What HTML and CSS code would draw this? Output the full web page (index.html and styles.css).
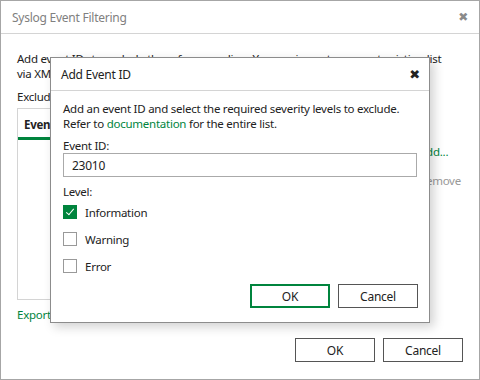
FILE: index.html
```html
<!DOCTYPE html>
<html lang="en">

<head>
    <meta charset="UTF-8">
    <meta name="viewport" content="width=device-width, initial-scale=1.0">
    <title>Syslog Event Filtering</title>
    <link rel="stylesheet" href="styles.css">
</head>

<body>
    <div class="window">
        <div class="titlebar">
            <span class="title">Syslog Event Filtering</span>
            <span class="close">&#x2716;</span>
        </div>

        <div class="content">
            <p class="intro">Add event IDs to exclude them from sending. You can import or export existing list<br>via XML file.</p>
            <p class="label">Exclude the following events:</p>

            <div class="list-row">
                <div class="list-box">
                    <div class="tabs"><span class="tab active">Event ID</span></div>
                </div>
                <div class="list-actions">
                    <a href="#" class="link">Add...</a>
                    <a href="#" class="link disabled">Remove</a>
                </div>
            </div>

            <div class="io-links">
                <a href="#" class="link">Export...</a>
                <a href="#" class="link">Import...</a>
            </div>

            <div class="buttons">
                <button class="btn">OK</button>
                <button class="btn">Cancel</button>
            </div>
        </div>

        <!-- 弹出的子对话框 -->
        <div class="dialog">
            <div class="titlebar dialog-titlebar">
                <span class="title">Add Event ID</span>
                <span class="close">&#x2716;</span>
            </div>
            <div class="dialog-body">
                <p class="desc">Add an event ID and select the required severity levels to exclude.<br>
                    Refer to <a href="#" class="link">documentation</a> for the entire list.</p>

                <label class="field-label" for="eventId">Event ID:</label>
                <input type="text" id="eventId" class="input" value="23010">

                <p class="field-label level">Level:</p>
                <ul class="checks">
                    <li class="check checked"><i class="box"></i><span>Information</span></li>
                    <li class="check"><i class="box"></i><span>Warning</span></li>
                    <li class="check"><i class="box"></i><span>Error</span></li>
                </ul>

                <div class="buttons dialog-buttons">
                    <button class="btn primary">OK</button>
                    <button class="btn dark">Cancel</button>
                </div>
            </div>
        </div>
    </div>
</body>

</html>
```

FILE: styles.css
```css
* {
    box-sizing: border-box;
}

body {
    margin: 0;
    font-family: "Noto Sans", "Open Sans", sans-serif;
    font-size: 11.5px;
    letter-spacing: -0.25px;
    color: #222;
}

p {
    margin: 0;
}

ul {
    padding: 0;
    margin: 0;
    list-style: none;
}

.window {
    position: relative;
    width: 480px;
    height: 380px;
    border: 1px solid #a6a6a6;
    background: #fff;
    overflow: hidden;
}

.titlebar {
    display: flex;
    align-items: center;
    justify-content: space-between;
    height: 33px;
    padding: 0 11px 0 11px;
    border-bottom: 1px solid #d4d4d4;
}

.titlebar .title {
    color: #808080;
    font-size: 12px;
}

.titlebar .close {
    color: #8a8a8a;
    font-size: 12px;
    font-family: "DejaVu Sans", sans-serif;
}

.content {
    padding: 17px 16px 0 16px;
}

.intro {
    line-height: 15px;
    width: 450px;
}

.label {
    margin-top: 8px;
    line-height: 15px;
}

.list-row {
    display: flex;
    margin-top: 4px;
    gap: 12px;
}

.list-box {
    width: 390px;
    height: 192px;
    border: 1px solid #d4d4d4;
}

.tabs {
    display: flex;
    height: 31px;
}

.tab {
    padding: 8px 6px 0 6px;
    font-weight: bold;
}

.tab.active {
    border-bottom: 3px solid #00843d;
}

.list-actions {
    display: flex;
    flex-direction: column;
    gap: 14px;
    padding-top: 36px;
}

.link {
    color: #00843d;
    text-decoration: none;
}

.link.disabled {
    color: #999;
}

.io-links {
    display: flex;
    gap: 150px;
    margin-top: 7px;
    line-height: 15px;
}

.buttons {
    display: flex;
    justify-content: flex-end;
    gap: 8px;
    margin-top: 16px;
}

.btn {
    width: 80px;
    height: 24px;
    background: #fff;
    border: 1px solid #555;
    font-family: inherit;
    font-size: 12px;
    letter-spacing: inherit;
    color: #222;
    padding: 0;
}

.btn.primary {
    border: 2px solid #00843d;
}

/* 子对话框 */
.dialog {
    position: absolute;
    left: 49px;
    top: 56px;
    width: 380px;
    height: 266px;
    background: #fff;
    border: 1px solid #8c8c8c;
    box-shadow: 4px 4px 10px rgba(0, 0, 0, 0.18);
}

.dialog-titlebar {
    height: 33px;
    padding: 0 9px 0 10px;
}

.dialog-titlebar .title {
    color: #222;
    font-size: 12px;
}

.dialog-titlebar .close {
    color: #222;
    font-size: 13px;
}

.dialog-body {
    padding: 10px 11px 0 12px;
}

.desc {
    line-height: 15px;
}

.field-label {
    display: block;
    margin-top: 7px;
    line-height: 15px;
}

.input {
    display: block;
    width: 354px;
    height: 24px;
    margin-top: 0;
    border: 1px solid #aaa;
    padding: 0 8px;
    font-family: inherit;
    font-size: 12px;
    letter-spacing: inherit;
    color: #222;
    outline: none;
}

.level {
    margin-top: 7px;
}

.checks {
    margin-top: 6px;
}

.check {
    display: flex;
    align-items: center;
    height: 14px;
    margin-bottom: 13px;
}

.check .box {
    display: inline-block;
    width: 14px;
    height: 14px;
    border: 1px solid #999;
    margin-right: 8px;
    position: relative;
}

.check.checked .box {
    background: #00843d;
    border-color: #00843d;
}

.check.checked .box::after {
    content: '';
    position: absolute;
    left: 4px;
    top: 1px;
    width: 3px;
    height: 7px;
    border: solid #fff;
    border-width: 0 1.5px 1.5px 0;
    transform: rotate(40deg);
}

.dialog-buttons {
    margin-top: -2px;
}
```
